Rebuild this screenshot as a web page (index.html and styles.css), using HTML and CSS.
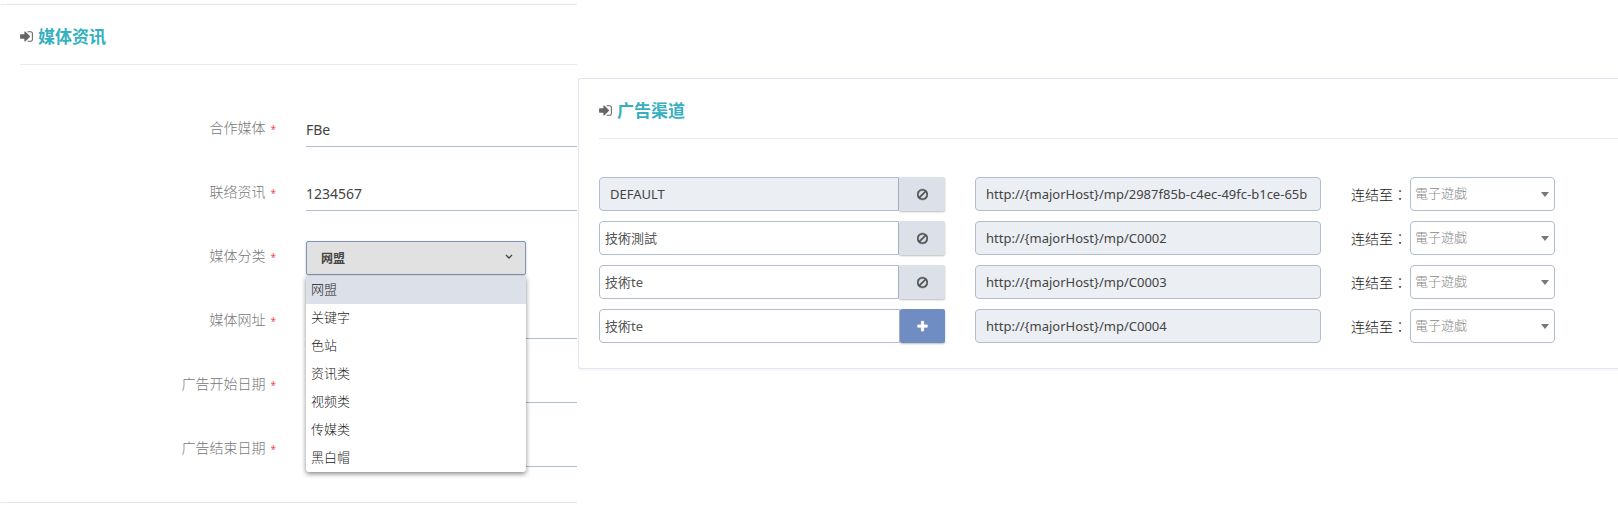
FILE: index.html
```
<!DOCTYPE html>
<html lang="zh-CN">
<head>
<meta charset="utf-8">
<title>媒体资讯</title>
<link rel="stylesheet" href="styles.css">
</head>
<body>
<svg class="sprite" aria-hidden="true">
  <symbol id="sign-in" viewBox="0 0 1536 1792"><path d="M1184 896q0 26-19 45l-544 544q-19 19-45 19t-45-19-19-45v-288h-448q-26 0-45-19t-19-45v-384q0-26 19-45t45-19h448v-288q0-26 19-45t45-19 45 19l544 544q19 19 19 45zm352-352v704q0 119-84.5 203.5t-203.5 84.5h-320q-13 0-22.5-9.5t-9.5-22.5q0-4-1-20t-.5-26.5 3-23.5 10-19.5 20.500-6.500h320q66 0 113-47t47-113v-704q0-66-47-113t-113-47h-312l-11.500-1-11.500-3-8-5.500-7-9-2-13.500q0-4-1-20t-.5-26.500 3-23.500 10-19.500 20.500-6.500h320q119 0 203.500 84.500t84.500 203.500z"/></symbol>
  <symbol id="ban" viewBox="0 0 1536 1792"><path d="M1312 893q0-161-87-295l-754 753q137 89 297 89 111 0 211.5-43.5t173.5-116.5 116-174.5 43-212.500zm-999 299l755-754q-135-91-300-91-148 0-273 73t-198 199-73 274q0 162 89 299zm1223-299q0 157-61 300t-163.500 246-245 164-298.500 61-298.500-61-245-164-163.500-246-61-300 61-299.500 163.500-245.500 245-164 298.500-61 298.500 61 245 164 163.500 245.500 61 299.500z"/></symbol>
  <symbol id="plus" viewBox="0 0 1408 1792"><path d="M1408 736v192q0 40-28 68t-68 28h-416v416q0 40-28 68t-68 28h-192q-40 0-68-28t-28-68v-416h-416q-40 0-68-28t-28-68v-192q0-40 28-68t68-28h416v-416q0-40 28-68t68-28h192q40 0 68 28t28 68v416h416q40 0 68 28t28 68z"/></symbol>
  <symbol id="chevron" viewBox="0 0 8 6"><path d="M1 1l3 3 3-3" fill="none" stroke="currentColor" stroke-width="1.3"/></symbol>
  <symbol id="caret" viewBox="0 0 8 5"><path d="M0 0h8L4 5z"/></symbol>
</svg>
<main class="page">
  <section class="panel panel-media">
    <header class="panel-head">
      <svg class="icon head-icon"><use href="#sign-in"/></svg>
      <h2 class="panel-title">媒体资讯</h2>
    </header>
    <form class="media-form">
      <div class="field">
        <label class="field-label" for="partner">合作媒体<span class="required">*</span></label>
        <input class="line-input" id="partner" type="text" value="FBe">
      </div>
      <div class="field">
        <label class="field-label" for="contact">联络资讯<span class="required">*</span></label>
        <input class="line-input" id="contact" type="text" value="1234567">
      </div>
      <div class="field">
        <label class="field-label" for="category">媒体分类<span class="required">*</span></label>
        <div class="category">
          <select class="category-select" id="category"><option>网盟</option></select>
          <svg class="chevron"><use href="#chevron"/></svg>
          <ul class="menu" role="listbox" aria-label="媒体分类">
            <li class="menu-item selected" role="option" aria-selected="true">网盟</li>
            <li class="menu-item" role="option">关键字</li>
            <li class="menu-item" role="option">色站</li>
            <li class="menu-item" role="option">资讯类</li>
            <li class="menu-item" role="option">视频类</li>
            <li class="menu-item" role="option">传媒类</li>
            <li class="menu-item" role="option">黑白帽</li>
          </ul>
        </div>
      </div>
      <div class="field">
        <label class="field-label" for="url">媒体网址<span class="required">*</span></label>
        <input class="line-input" id="url" type="text">
      </div>
      <div class="field">
        <label class="field-label" for="start">广告开始日期<span class="required">*</span></label>
        <input class="line-input" id="start" type="text">
      </div>
      <div class="field">
        <label class="field-label" for="end">广告结束日期<span class="required">*</span></label>
        <input class="line-input" id="end" type="text">
      </div>
    </form>
  </section>

  <section class="panel panel-channel">
    <header class="panel-head">
      <svg class="icon head-icon"><use href="#sign-in"/></svg>
      <h2 class="panel-title">广告渠道</h2>
    </header>
    <form class="channels">
      <div class="channel">
        <div class="group">
          <input class="box name readonly" type="text" value="DEFAULT" aria-label="渠道名称 1" readonly>
          <button class="action" type="button" aria-label="停用"><svg class="icon"><use href="#ban"/></svg></button>
        </div>
        <input class="box readonly" type="text" value="http://{majorHost}/mp/2987f85b-c4ec-49fc-b1ce-65b" aria-label="渠道网址 1" readonly>
        <div class="link">
          <label class="link-label" for="link1">连结至<span class="colon" lang="zh-TW">：</span></label>
          <div class="link-control"><select class="box link-select" id="link1"><option>電子遊戯</option></select><svg class="caret"><use href="#caret"/></svg></div>
        </div>
      </div>
      <div class="channel">
        <div class="group">
          <input class="box name" type="text" value="技術測試" aria-label="渠道名称 2">
          <button class="action" type="button" aria-label="停用"><svg class="icon"><use href="#ban"/></svg></button>
        </div>
        <input class="box readonly" type="text" value="http://{majorHost}/mp/C0002" aria-label="渠道网址 2" readonly>
        <div class="link">
          <label class="link-label" for="link2">连结至<span class="colon" lang="zh-TW">：</span></label>
          <div class="link-control"><select class="box link-select" id="link2"><option>電子遊戯</option></select><svg class="caret"><use href="#caret"/></svg></div>
        </div>
      </div>
      <div class="channel">
        <div class="group">
          <input class="box name" type="text" value="技術te" aria-label="渠道名称 3">
          <button class="action" type="button" aria-label="停用"><svg class="icon"><use href="#ban"/></svg></button>
        </div>
        <input class="box readonly" type="text" value="http://{majorHost}/mp/C0003" aria-label="渠道网址 3" readonly>
        <div class="link">
          <label class="link-label" for="link3">连结至<span class="colon" lang="zh-TW">：</span></label>
          <div class="link-control"><select class="box link-select" id="link3"><option>電子遊戯</option></select><svg class="caret"><use href="#caret"/></svg></div>
        </div>
      </div>
      <div class="channel">
        <div class="group">
          <input class="box name" type="text" value="技術te" aria-label="渠道名称 4">
          <button class="action add" type="button" aria-label="新增"><svg class="icon"><use href="#plus"/></svg></button>
        </div>
        <input class="box readonly" type="text" value="http://{majorHost}/mp/C0004" aria-label="渠道网址 4" readonly>
        <div class="link">
          <label class="link-label" for="link4">连结至<span class="colon" lang="zh-TW">：</span></label>
          <div class="link-control"><select class="box link-select" id="link4"><option>電子遊戯</option></select><svg class="caret"><use href="#caret"/></svg></div>
        </div>
      </div>
    </form>
  </section>
</main>
</body>
</html>
```
FILE: styles.css
```
* { box-sizing: border-box; }
body {
  margin: 0;
  background: #fff;
  color: #444;
  font-family: "Noto Sans", "Noto Sans CJK SC", sans-serif;
  font-size: 14px;
  line-height: 20px;
}
input, select, button { margin: 0; font: inherit; color: inherit; }
select { appearance: none; }
.sprite { position: absolute; width: 0; height: 0; }
.icon { width: 11px; height: 13px; fill: currentColor; stroke: currentColor; stroke-width: 40px; }

.page {
  display: grid;
  grid-template-columns: 578fr 1040fr;
  align-items: start;
}
.panel {
  border: 1px solid #e1e6ef;
  border-right: 0;
  box-shadow: 0 2px 1px #f7f7f9;
}
.panel-media { margin: 4px 1px 0; border-left: 0; padding-left: 19px; }
.panel-channel { margin-top: 78px; padding-left: 20px; border-radius: 3px 0 0 3px; }
.panel-head {
  display: flex;
  align-items: center;
  gap: 5px;
  height: 60px;
  padding-top: 4px;
  border-bottom: 1px solid #e7ebf2;
}
.head-icon { width: 13px; height: 15px; color: #666; stroke: none; }
.panel-title { margin: 0; color: #36b0bf; font-size: 17px; font-weight: 700; line-height: 24px; }

.media-form { display: grid; gap: 30px; padding: 48px 0 35px; }
.field { display: grid; grid-template-columns: 256fr 271fr; column-gap: 30px; height: 34px; }
.field-label { padding-top: 5px; color: #777; font-weight: 300; text-align: right; }
.required { margin-left: 5px; color: #f05050; font-size: 10px; font-weight: 400; }
.line-input {
  width: 100%;
  min-width: 0;
  padding: 0;
  border: 0;
  border-bottom: 1px solid #b4bdd0;
  background: none;
}
.category { position: relative; width: 220px; max-width: 100%; }
.category-select {
  display: block;
  width: 100%;
  height: 34px;
  padding: 2px 14px 0;
  border: 1px solid #7f94b8;
  border-radius: 2px;
  background: #e1e1e1;
  font-size: 12px;
  font-weight: 700;
  box-shadow: 0 1px 3px #0003;
}
.chevron { position: absolute; top: 13px; right: 13px; width: 8px; height: 6px; }
.menu {
  position: absolute;
  top: 35px;
  left: 0;
  width: 100%;
  margin: 0;
  padding: 0;
  overflow: hidden;
  list-style: none;
  border-radius: 0 0 3px 3px;
  background: #fff;
  box-shadow: 0 2px 5px #0007;
}
.menu-item { padding: 3px 5px 5px; color: #222; font-size: 13px; font-weight: 300; }
.selected { background: #dce0e9; }

.channels { display: grid; gap: 10px; padding: 38px 63px 25px 0; }
.channel { display: grid; grid-template-columns: 346fr 346fr 204fr; gap: 30px; }
.group { display: flex; min-width: 0; }
.box {
  width: 100%;
  min-width: 0;
  height: 34px;
  padding: 0 10px;
  border: 1px solid #b4bdd0;
  border-radius: 4px;
  background: #fff;
  font-size: 13px;
}
.readonly { background: #ebeef3; }
.name { flex: 1; padding: 0 5px 2px; border-radius: 4px 0 0 4px; color: #555; }
.name.readonly { padding: 0 10px; color: #444; }
.action {
  display: flex;
  align-items: center;
  justify-content: center;
  flex: none;
  width: 46px;
  height: 34px;
  padding: 0;
  border: 0;
  border-radius: 2px;
  background: #dce0e8;
  color: #555;
  box-shadow: 0 1px 2px #0004;
}
.add { width: 45px; background: #6f8dc2; color: #fff; }
.link { display: flex; align-items: center; justify-content: space-between; }
.link-label { flex: none; color: #222; white-space: nowrap; font-weight: 300; }
.colon { font-family: "Noto Sans CJK TC", sans-serif; }
.link-control { position: relative; flex: none; width: 145px; }
.link-select { display: block; padding: 0 4px 2px; color: #888; font-weight: 300; }
.caret { position: absolute; top: 15px; right: 6px; width: 8px; height: 5px; fill: #777; }
```
